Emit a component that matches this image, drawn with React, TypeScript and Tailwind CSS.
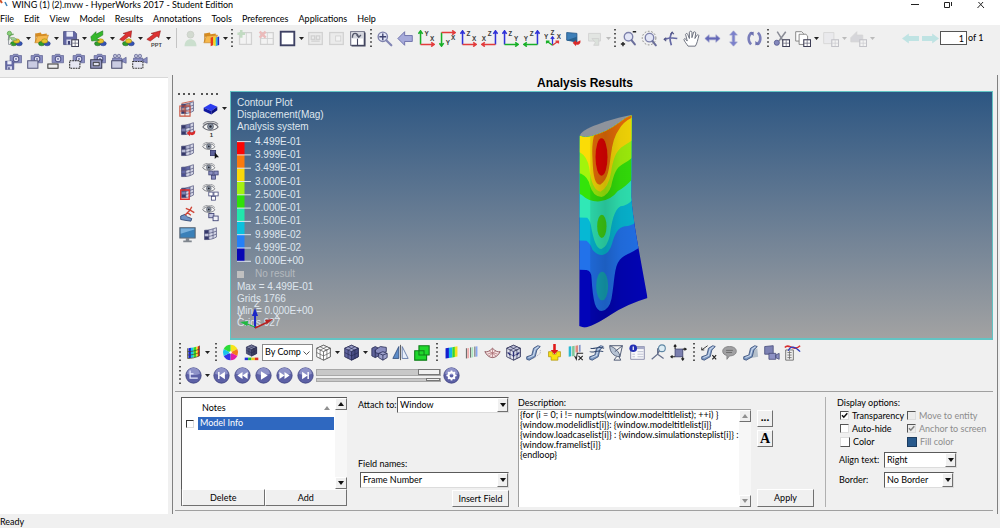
import React from "react";

type Kids = { children?: React.ReactNode };

const Svg = ({ children, size = "h-[17px] w-[17px]" }: Kids & { size?: string }) => (
  <svg viewBox="0 0 20 20" className={`${size} shrink-0`} fill="none" aria-hidden="true">
    {children}
  </svg>
);

const Slot = ({ label, children, faded }: Kids & { label: string; faded?: boolean }) => (
  <button
    type="button"
    aria-label={label}
    disabled={faded}
    className={`flex h-[21px] w-[21px] shrink-0 items-center justify-center ${faded ? "opacity-25" : ""}`}
  >
    <Svg>{children}</Svg>
  </button>
);

const Drop = ({ faded }: { faded?: boolean }) => (
  <span className={`flex w-[7px] shrink-0 items-center justify-center ${faded ? "opacity-25" : ""}`}>
    <svg viewBox="0 0 5 3" className="h-[3px] w-[5px]" aria-hidden="true">
      <path d="M0 0h5L2.500 3z" fill="#222" />
    </svg>
  </span>
);

const Dots = ({ wide }: { wide?: boolean }) => (
  <span className={`flex shrink-0 items-center justify-center ${wide ? "w-[9px]" : "w-[6px]"}`}>
    <svg viewBox="0 0 2 18" className="h-[18px] w-[2px]" aria-hidden="true">
      <path d="M1 0v18" stroke="#222" strokeWidth="1.500" strokeDasharray="1.500 2.600" />
    </svg>
  </span>
);

/* ---------- icon parts ---------- */

const Balls = () => (
  <>
    <ellipse cx="9" cy="16" rx="3.600" ry="2.600" fill="#2f9e2b" stroke="#175f1b" strokeWidth=".6" />
    <ellipse cx="15.500" cy="16" rx="3.600" ry="2.600" fill="#3454b4" stroke="#1d2f78" strokeWidth=".6" />
    <ellipse cx="12.500" cy="13" rx="3.600" ry="2.600" fill="#e8c62c" stroke="#94780f" strokeWidth=".6" />
  </>
);

const Pane = () => (
  <>
    <rect x="11.500" y="11.500" width="8" height="8" fill="#fff" stroke="#3b3b52" strokeWidth="1.300" />
    <path d="M15.500 12v7M12 15.500h7" stroke="#55556c" strokeWidth=".8" />
  </>
);

const Camera = () => (
  <>
    <path d="M6 3h3l1-1.500h5L16 3h3.500v8.500H6z" fill="#8a8ec2" stroke="#5c608f" strokeWidth=".8" />
    <circle cx="13" cy="7" r="3.300" fill="#e4e5f5" stroke="#55588a" strokeWidth="1.200" />
    <circle cx="13" cy="7" r="1.300" fill="#8589b8" />
  </>
);

const Video = () => (
  <>
    <circle cx="6" cy="3.500" r="2" fill="#b9bbd6" stroke="#5c608f" strokeWidth=".8" />
    <circle cx="10.500" cy="3.500" r="2" fill="#b9bbd6" stroke="#5c608f" strokeWidth=".8" />
    <path d="M3 6h11v6H3zM14 8l5-3v7l-5-2z" fill="#8a8ec2" stroke="#5c608f" strokeWidth=".8" />
  </>
);

const Disk = ({ small }: { small?: boolean }) => (
  <g transform={small ? "translate(0 9) scale(.55)" : "translate(1 1) scale(.85)"}>
    <path d="M1 1h15l3 3v15H1z" fill="#6468a4" stroke="#3f4378" />
    <path d="M5 1h9v7H5z" fill="#eceefa" />
    <path d="M5 12h10v7H5z" fill="#dadcf0" />
    <path d="M7 14h3v5H7z" fill="#3f4378" />
  </g>
);

const Folder = () => (
  <>
    <path d="M2 4l6-1 1 2 6-1v4H2z" fill="#d78c22" />
    <path d="M1 15L4 7l13-1-3 9z" fill="#f6b84c" stroke="#c27f20" strokeWidth=".7" />
    <path d="M2 4v10" stroke="#c27f20" />
  </>
);

const Cube = ({ fill = "#6064a0", top = "#9ea2cc", side = "#474b82", line = "#23264d" }) => (
  <>
    <path d="M10 1.500l8 3.500v10l-8 4-8-4V5z" fill={fill} stroke={line} strokeWidth=".9" />
    <path d="M10 1.500l8 3.500-8 4-8-4z" fill={top} stroke={line} strokeWidth=".8" />
    <path d="M18 5v10l-8 4V9z" fill={side} stroke={line} strokeWidth=".8" />
    <path d="M2 10l8 4 8-4M6 7v10M14 7v10M6 3.200l8 4M14 3.200l-8 4" stroke={line} strokeWidth=".7" />
  </>
);

const Mesh = ({ a = "#35386b", b = "#7d82b4" }) => (
  <>
    <path d="M3 5c5 0 8-1 14-3v11c-5 3-9 3-14 3z" fill="#d6d8e8" />
    <path d="M3 5l5-.3v4L3 9z" fill={a} />
    <path d="M8 4.700L13 3.500v4L8 8.700z" fill={b} />
    <path d="M3 9l5-.3v4H3z" fill={b} />
    <path d="M3 12.500h5v3.500H3z" fill={a} />
    <path d="M3 5c5 0 8-1 14-3v11c-5 3-9 3-14 3zM3 9c5 0 9-1 14-3M3 12.500c5 0 9-.8 14-3M8 5v11M13 3.500v11.500" stroke="#4b4e78" strokeWidth=".8" />
  </>
);

const Eye = ({ big }: { big?: boolean }) => (
  <g transform={big ? "translate(0 0)" : "translate(0 0) scale(.8)"}>
    <path d="M1 7c4-6 14-6 18 0-4 5-14 5-18 0z" fill="#f4f4f4" stroke="#63656e" strokeWidth="1.200" />
    <circle cx="10" cy="6.500" r="3.500" fill="#8c97a8" stroke="#464a55" strokeWidth=".8" />
    <circle cx="10" cy="6.500" r="1.400" fill="#22242c" />
    <path d="M1 4C5-1 15-1 19 4" stroke="#8a8c92" strokeWidth="1.200" />
  </g>
);

const Blocks = ({ fill }: { fill: string }) => (
  <g fill={fill} stroke="#3b3f72" strokeWidth=".9">
    <rect x="8" y="9.500" width="5" height="4.500" />
    <rect x="14" y="9.500" width="5" height="4.500" />
    <rect x="11" y="14.500" width="5" height="4.500" />
  </g>
);

const Leg = () => (
  <>
    <path d="M2 15l6-2 2-8 5-3 3 1-4 4-2 8-7 4-3-1z" fill="#7f9bc4" stroke="#2f4672" strokeWidth=".9" />
    <path d="M4 16l6-2.500L12 6l4-3" stroke="#d3dff0" strokeWidth="1.200" />
  </>
);

const Lens = ({ x = 11, y = 8 }) => (
  <g transform={`translate(${x - 11} ${y - 8})`}>
    <circle cx="11" cy="8" r="5" fill="#e3e6f6" stroke="#7d81ab" strokeWidth="1.600" />
    <path d="M14.500 12l4 5" stroke="#6a6e9b" strokeWidth="2.400" strokeLinecap="round" />
  </g>
);

const Letter = ({ x, y, c }: { x: number; y: number; c: string }) => (
  <text x={x} y={y} fontSize="7.500" fontWeight="bold" fill="#3b3b3b" fontFamily="Liberation Sans, sans-serif">
    {c}
  </text>
);

/* Two coloured axes meeting in a corner; `v` is the upright axis and `h` the level one. */
const Axes = ({ v, h, vl, hl, flip, down }: { v: string; h: string; vl: string; hl: string; flip?: boolean; down?: boolean }) => {
  const x = flip ? 17 : 3;
  const end = flip ? 1 : 19;
  const y = down ? 3 : 17;
  const top = down ? 19 : 1;
  const sy = down ? -1 : 1;
  const sx = flip ? 1 : -1;
  return (
    <>
      <path d={`M${x} ${y}V${top}M${x - 2.500} ${top + 3.500 * sy}L${x} ${top}l2.500 ${3.500 * sy}`} stroke={v} strokeWidth="1.800" />
      <path d={`M${x} ${y}H${end}M${end + 3.500 * sx} ${y - 2.500}L${end} ${y}l${3.500 * sx} 2.500`} stroke={h} strokeWidth="1.800" />
      <Letter x={flip ? 8 : down ? 8 : 7.500} y={down ? 18 : 6.500} c={vl} />
      <Letter x={flip ? 1 : 14} y={down ? 12 : 13.500} c={hl} />
    </>
  );
};

const R = "#e23b3b";
const G = "#18b028";
const B = "#2f32d8";

const Rainbow = () => (
  <>
    <path d="M4 5l3-.5v12L4 17z" fill="#1420d0" />
    <path d="M7 4.500L10 4v12l-3 .5z" fill="#12c8e8" />
    <path d="M10 4l3-.7v12L10 16z" fill="#38d828" />
    <path d="M13 3.300l2-.5v12l-2 .5z" fill="#f4e020" />
    <path d="M15 2.800l2-.6v12l-2 .6z" fill="#e42818" />
  </>
);

const Round = ({ label, children }: Kids & { label: string }) => (
  <button type="button" aria-label={label} className="flex h-[21px] w-[21px] shrink-0 items-center justify-center">
    <Svg>
      <circle cx="10" cy="10" r="9" fill="#5d61a6" stroke="#404482" />
      <path d="M2.500 8a7.500 7 0 0 1 15 0c-4 2-11 2-15 0z" fill="#8e92c8" />
      {children}
    </Svg>
  </button>
);

/* ---------- toolbars ---------- */

const MainTools = () => (
  <div className="flex h-[26px] items-center pl-1">
    <Slot label="New session">
      <Balls />
      <path d="M3 12c0-5 3-7 6-7" stroke="#6fa565" strokeWidth="2" />
      <path d="M5 9h5l3 3H7z" fill="#a8d49a" stroke="#5d9155" strokeWidth=".7" />
      <circle cx="4" cy="4" r="2.500" fill="#8bd07c" stroke="#4c9c3e" strokeWidth=".8" />
      <path d="M3 6v11h4" stroke="#8a8f98" />
    </Slot>
    <Drop />
    <Slot label="Open session"><Folder /><Balls /></Slot>
    <Drop />
    <Slot label="Save session"><Disk /><Pane /></Slot>
    <Drop />
    <Slot label="Import">
      <Balls />
      <path d="M1 8l6-6v3l8-4v5l-7 4 3 2-9 1z" fill="#35b82c" stroke="#1d7d1c" strokeWidth=".7" />
    </Slot>
    <Drop />
    <Slot label="Export">
      <Balls />
      <path d="M2 11l7-6-3-1 10-3-1 8-2-2-7 6z" fill="#dd3232" stroke="#931d1d" strokeWidth=".7" />
    </Slot>
    <Drop />
    <Slot label="Publish to PPT">
      <path d="M1 11l8-6-3-1 11-3-2 8-2-2-8 6z" fill="#dd3232" stroke="#931d1d" strokeWidth=".7" />
      <text x="6" y="19.500" fontSize="6.500" fontWeight="bold" fill="#444" fontFamily="Liberation Sans, sans-serif">PPT</text>
    </Slot>
    <Drop />
    <span className="flex w-[8px] shrink-0 justify-center"><span className="h-[20px] w-px bg-[#c4c4c4]" /></span>
    <Slot label="User profile" faded>
      <circle cx="10" cy="5.500" r="4" fill="#7d9a72" stroke="#5d7355" />
      <path d="M3 19c0-5 3-8 7-8s7 3 7 8z" fill="#5fae6b" />
    </Slot>
    <Slot label="Open results">
      <Folder />
      <path d="M9 9l3-1v10l-3 1z" fill="#e43a1c" /><path d="M12 8l3 1v10l-3-1z" fill="#f1d922" />
      <path d="M15 9l2-.7v10l-2 .7z" fill="#2ab7e0" /><path d="M17 8.300l2-.6v10l-2 .6z" fill="#1b2cc4" />
    </Slot>
    <Drop />
    <Dots />
    <Slot label="Add page" faded>
      <path d="M3 3h14v14H3z" fill="#fff" stroke="#777" strokeWidth="1.500" /><path d="M11 3v14" stroke="#777" />
      <path d="M5 0v9M.5 4.500h9" stroke="#3da03d" strokeWidth="3" />
    </Slot>
    <Slot label="Delete page" faded>
      <path d="M3 3h15v14H3z" fill="#fff" stroke="#777" strokeWidth="1.500" /><path d="M11 3v14M3 10h15" stroke="#777" />
      <path d="M2 2l7 7M9 2l-7 7" stroke="#e02020" strokeWidth="3" />
    </Slot>
    <Slot label="Page layout">
      <rect x="2" y="2" width="16" height="16" fill="#fff" stroke="#3e4164" strokeWidth="2.200" />
    </Slot>
    <Drop />
    <Slot label="Swap windows" faded>
      <rect x="2" y="3" width="16" height="14" fill="#ddd" stroke="#777" strokeWidth="1.500" />
      <path d="M5 7h4v4H5zM11 7h4v4h-4zM5 13h10" stroke="#777" strokeWidth="1.500" />
    </Slot>
    <Slot label="Expand window" faded>
      <rect x="2" y="3" width="16" height="14" fill="#ddd" stroke="#777" strokeWidth="1.500" />
      <rect x="9" y="7" width="6" height="6" fill="#fff" stroke="#777" />
    </Slot>
    <Slot label="Synchronise windows">
      <rect x="2" y="2" width="16" height="16" fill="#fff" stroke="#6a6d82" strokeWidth="1.300" />
      <path d="M18.500 3v15.500H3" stroke="#43465f" strokeWidth="2" /><path d="M10 10v8" stroke="#43465f" strokeWidth="1.300" />
      <path d="M3 3h14v7H3z" fill="#d4d6de" /><path d="M4 9c0-7 6-6 7-1M9 5.500l2.500 3L14 6" stroke="#55596c" strokeWidth="1.700" />
    </Slot>
    <Dots />
    <Slot label="Fit">
      <circle cx="8" cy="8" r="5.500" fill="#e3e6f6" stroke="#7d81ab" strokeWidth="1.600" />
      <path d="M12 12l6 6" stroke="#8286b4" strokeWidth="2.600" strokeLinecap="round" />
      <path d="M8 4v8M4 8h8" stroke="#3e4270" strokeWidth="1.600" />
    </Slot>
    <Slot label="Previous view">
      <path d="M1 10l8-8v4.500h9v7H9V18z" fill="#a6aada" stroke="#6468a4" />
    </Slot>
    <Slot label="XY top view"><Axes v={G} h={R} vl="Y" hl="X" /></Slot>
    <Slot label="XY bottom view"><Axes v={G} h={R} vl="Y" hl="X" down /></Slot>
    <Slot label="XZ left view"><Axes v={B} h={R} vl="Z" hl="X" /></Slot>
    <Slot label="XZ right view"><Axes v={B} h={R} vl="Z" hl="X" flip /></Slot>
    <Slot label="YZ front view"><Axes v={B} h={G} vl="Z" hl="Y" /></Slot>
    <Slot label="YZ back view"><Axes v={B} h={G} vl="Z" hl="Y" flip /></Slot>
    <Slot label="Isometric view">
      <path d="M10 18V8M8 10.500L10 8l2 2.500" stroke={B} strokeWidth="1.500" />
      <path d="M10 18l-7-5M3 16v-3h3.500" stroke={G} strokeWidth="1.500" />
      <path d="M10 18l7-5M17 16v-3h-3.500" stroke={R} strokeWidth="1.500" />
      <Letter x={7.700} y={6} c="Z" /><Letter x={0} y={10} c="Y" /><Letter x={15} y={10} c="X" />
    </Slot>
    <Slot label="Reverse view">
      <path d="M2 3l12 1v10L2 12z" fill="#3d7fb8" stroke="#25598a" /><path d="M2 12l12-4v6z" fill="#28618f" />
      <path d="M18 12c1 4-2 6-5 5v2l-4-4 4-3v2c2 0 3-.5 5-2z" fill="#d92a2a" />
    </Slot>
    <Slot label="Capture area" faded>
      <path d="M3 4h14v9H3z" fill="#b9c8bb" stroke="#777" /><path d="M7 10h8v8H9l2-3z" fill="#9fb79f" stroke="#777" />
    </Slot>
    <Drop faded />
    <Dots />
    <Slot label="Zoom in and out">
      <Lens x={10} y={8} /><path d="M15 2h4M1 16.500h5M3.500 14v5" stroke="#222" strokeWidth="1.700" />
    </Slot>
    <Slot label="Zoom area">
      <Lens x={10} y={9} /><circle cx="9.500" cy="9.500" r="8" stroke="#777" strokeWidth="1" strokeDasharray="2 2" />
    </Slot>
    <Slot label="Rotate">
      <path d="M12 3c-3 3-3 9-1 15M3 11c6-2 10-2 15-1" stroke="#6468a4" strokeWidth="2" />
      <path d="M10 5l2-2.500L14 5M5 9l-2.500 2L5 13" stroke="#4e5280" strokeWidth="1.200" />
    </Slot>
    <Slot label="Pan">
      <path d="M6 19c-2-3-4-5-5-8 1-1.500 2-.5 4 2L3 5c1-1.500 2-1 2.500 0L7.500 10 7.500 2.500c.5-1.500 2.500-1.500 3 0V9l2-6.500c1-1 2.500 0 2.500 1L14 10l2.500-4c1-1 2.500 0 2 1-1 4-2 9-4 12z" fill="#fff" stroke="#666a78" strokeWidth="1.100" />
    </Slot>
    <Slot label="Pan left and right"><path d="M1 10l5-4.500v3h8v-3l5 4.500-5 4.500v-3H6v3z" fill="#6468b8" stroke="#9a9dcb" strokeWidth=".8" /></Slot>
    <Slot label="Pan up and down"><path d="M10 1l4.500 5h-3v8h3L10 19l-4.500-5h3V6h-3z" fill="#7b80cc" stroke="#9a9dcb" strokeWidth=".8" /></Slot>
    <Slot label="Rotate about screen axis">
      <path d="M7 3C2 6 2 13 6 17M13 17c5-3 5-10 1-14" stroke="#7a7eba" strokeWidth="3" />
      <path d="M4 3l5-1v5zM16 17l-5 1v-5z" fill="#6b6fae" />
    </Slot>
    <Dots />
    <Slot label="Cut">
      <path d="M5 2l7 11M15 2L7 13" stroke="#8a8c96" strokeWidth="1.800" />
      <circle cx="4.500" cy="15" r="3" fill="#8488bc" stroke="#555a90" /><Pane />
    </Slot>
    <Slot label="Copy">
      <path d="M2 2h7l2 2v9H2z" fill="#fff" stroke="#777" /><path d="M6 5h8l2 2v10H6z" fill="#fff" stroke="#777" /><Pane />
    </Slot>
    <Drop />
    <Slot label="Paste" faded><path d="M2 3h12v13H2z" fill="#dcdce6" stroke="#888" /><Pane /></Slot>
    <Drop faded />
    <Slot label="Overlay" faded><path d="M1 9l7-7v4h7v8H1z" fill="#8c8c9c" stroke="#888" /><Pane /></Slot>
    <Drop faded />
    <div className="ml-6 flex items-center">
      <button type="button" aria-label="Previous page" className="flex w-[20px] justify-center">
        <Svg><path d="M0 10l8-6v3h12v6H8v3z" fill="#bfe3e3" /></Svg>
      </button>
      <button type="button" aria-label="Next page" className="flex w-[20px] justify-center">
        <Svg><path d="M20 10l-8-6v3H0v6h12v3z" fill="#bfe3e3" /></Svg>
      </button>
      <label className="flex items-center gap-px font-['Lato',sans-serif] text-[9px]">
        <input aria-label="Page" defaultValue="1" className="h-[14px] w-[27px] border border-[#555] bg-white pr-[2px] text-right text-[9px]" />
        of 1
      </label>
    </div>
  </div>
);

const CaptureTools = () => (
  <div className="flex h-[21px] items-center pl-[3px]">
    <Slot label="Save image"><Camera /><Disk small /></Slot>
    <Slot label="Capture window"><Camera /><path d="M2 9h12v9H2z" fill="#c9cbe2" stroke="#55587c" strokeWidth="1.200" /></Slot>
    <Slot label="Capture panel"><Camera /><path d="M1 13h12v5H1z" fill="#eee" stroke="#333" strokeWidth="1.200" /></Slot>
    <Slot label="Capture dynamic rectangle"><Camera /><path d="M2 9h12v9H2z" fill="#e6e7f2" stroke="#222" strokeWidth="1.200" strokeDasharray="2 1" /></Slot>
    <Slot label="Capture page"><Camera /><path d="M2 8h13v10H2z" fill="#9a9dc4" stroke="#333652" strokeWidth="1.200" /><path d="M5 11h7v4H5z" fill="#dfe0ee" stroke="#222" /></Slot>
    <Slot label="Record window"><Video /><path d="M2 9h12v9H2z" fill="#c9cbe2" stroke="#44476a" strokeWidth="1.200" /></Slot>
    <Slot label="Record area"><Video /><path d="M2 10h12v8H2z" fill="#e6e7f2" stroke="#333" strokeWidth="1.200" strokeDasharray="2 1" /></Slot>
  </div>
);

const DotRow = () => (
  <svg viewBox="0 0 18 2" className="mb-[3px] ml-px h-[2px] w-[18px]" aria-hidden="true">
    <path d="M0 1h18" stroke="#222" strokeWidth="1.500" strokeDasharray="2 3" />
  </svg>
);

const SideTools = () => (
  <div className="flex w-[57px] shrink-0 pl-1 pt-[2px]">
    <div className="flex w-[23px] flex-col items-start">
      <DotRow />
      <Slot label="Page mesh"><Mesh b="#b48a8a" /><path d="M1 7h12v12H1z" stroke="#c8503c" strokeWidth="1.300" /><path d="M1 13h12M7 7v12M3 4L17 1" stroke="#c8503c" /></Slot>
      <Slot label="Mask"><Mesh /><path d="M19 11c1 5-3 7-6 5v2l-4-4 4-3v2c3 1 4 0 6-2z" fill="#d92a2a" /></Slot>
      <Slot label="Show shaded elements"><Mesh b="#b8bbd6" /></Slot>
      <Slot label="Show elements"><Mesh a="#4b5092" b="#6469a8" /></Slot>
      <Slot label="Feature outline"><Mesh /><path d="M2 7h10v11H2z" stroke="#e03030" strokeWidth="1.600" /></Slot>
      <Slot label="Deformed">
        <path d="M2 13l5-2 3 3 5 2-1 3-7-1-5-1z" fill="#6f92c4" stroke="#2f4672" /><path d="M7 12l6-6 2-4M13 6l5 3M8 4l5 2M10 9l4 3" stroke="#cf4436" strokeWidth="1.600" />
      </Slot>
      <Slot label="Screen">
        <path d="M1 2h18v12H1z" fill="#3a80b8" stroke="#566270" strokeWidth="1.200" /><path d="M8 14h4v3H8zM5 17h10v2H5z" fill="#80868e" /><path d="M2 9l16-5V3H2z" fill="#78b0dc" />
      </Slot>
    </div>
    <div className="flex flex-col items-start">
      <DotRow />
      <div className="flex">
        <Slot label="Entity type"><path d="M2 9l8-4.500L18 8l-7 5z" fill="#2c3cf0" /><path d="M2 9l9 4v4l-9-4z" fill="#1018a0" /><path d="M11 13l7-5v4l-7 5z" fill="#0a1080" /></Slot>
        <Drop />
      </div>
      <Slot label="Show single"><Eye big /><text x="9" y="19" fontSize="7" fontWeight="bold" fill="#333" fontFamily="Liberation Sans, sans-serif">1</text></Slot>
      <Slot label="Pick visible"><Eye /><rect x="10" y="10" width="6" height="6" fill="#5b5f98" stroke="#35386b" /><path d="M15 12v8l2-2h3z" fill="#111" /></Slot>
      <Slot label="Show all"><Eye /><Blocks fill="#8a8ec0" /></Slot>
      <Slot label="Hide all"><Eye /><Blocks fill="#ffffff" /></Slot>
      <Slot label="Reverse visible"><Eye /><rect x="8" y="10" width="6" height="5" fill="#c5c7e0" stroke="#3b3f72" /><rect x="13" y="13" width="6" height="5.500" fill="#f2f2f8" stroke="#3b3f72" /></Slot>
      <Slot label="Mesh display"><Mesh b="#c4c6de" /></Slot>
    </div>
  </div>
);

/* ---------- graphics window ---------- */

const SCALE: [string, string][] = [
  ["4.499E-01", "#fb0404"],
  ["3.999E-01", "#fb7a0e"],
  ["3.499E-01", "#fbd80a"],
  ["3.000E-01", "#a4f012"],
  ["2.500E-01", "#30e008"],
  ["2.000E-01", "#22e6ac"],
  ["1.500E-01", "#0cc0dc"],
  ["9.998E-02", "#2480f8"],
  ["4.999E-02", "#0606b4"],
  ["0.000E+00", ""],
];

const Legend = () => (
  <div className="relative w-[110px] pl-[6px] pt-[5px] text-[10px] leading-[12px] text-[#dfe6ee]">
    <p>Contour Plot</p>
    <p>Displacement(Mag)</p>
    <p>Analysis system</p>
    <div className="mt-[2px] flex h-[133px] gap-1">
      <svg viewBox="0 0 140 1330" className="h-[133px] w-[14px]" aria-hidden="true">
        {SCALE.map(([value, color], i) => (
          <g key={value}>
            {color && <rect x="0" y={66 + i * 133} width="75" height="134" fill={color} />}
            <path d={`M0 ${66 + i * 133}H140`} stroke="#dfe6ee" strokeWidth="10" />
          </g>
        ))}
      </svg>
      <ol className="grid grid-rows-10 items-center">
        {SCALE.map(([value]) => (
          <li key={value}>{value}</li>
        ))}
      </ol>
    </div>
    <p className="mb-px flex items-center gap-[11px] text-[#b4b9be]">
      <span className="size-[7px] bg-[#c0c0c0]" />
      No result
    </p>
    <p>Max = 4.499E-01</p>
    <p>Grids 1766</p>
    <p>Min = 0.000E+00</p>
    <p>Grids 927</p>
    <svg viewBox="0 0 48 34" className="absolute bottom-[-4px] left-[3px] h-[34px] w-[48px]" fill="none" aria-hidden="true">
      <path d="M21 29V14" stroke="#1c28c8" strokeWidth="2" /><path d="M18 17l3-8 3 8z" fill="#1c28c8" />
      <path d="M21 29l13-6" stroke="#b82020" strokeWidth="1.500" /><path d="M31 21l8-1-6 5z" fill="#b82020" />
      <path d="M21 28l-8-3" stroke="#20b840" strokeWidth="1.200" /><path d="M6 23l8-1-1 5z" fill="#20b840" />
      <g fontSize="9" fill="#e6ecf2" fontFamily="Liberation Sans, sans-serif">
        <text x="20" y="8">Z</text><text x="40" y="20">X</text><text x="3" y="20">Y</text>
      </g>
    </svg>
  </div>
);

const Wing = () => (
  <svg viewBox="107 95 219 657" className="absolute left-1/2 top-[20px] h-[219px] w-[73px] -translate-x-1/2" role="img" aria-label="Wing contour">
    <defs>
      <clipPath id="wing">
        <path d="M120 166Q135 174 160 166Q200 156 240 126Q256 112 275 105L274 350Q278 400 290 470L323 653Q260 672 215 702Q150 745 130 741L118 737z" />
      </clipPath>
      <linearGradient id="shade" x1="0" x2="1">
        <stop offset="0" stopColor="#000" stopOpacity="0" />
        <stop offset=".15" stopColor="#000" stopOpacity="0" />
        <stop offset=".17" stopColor="#000" stopOpacity=".1" />
        <stop offset=".38" stopColor="#000" stopOpacity=".18" />
        <stop offset=".6" stopColor="#000" stopOpacity=".08" />
        <stop offset="1" stopColor="#000" stopOpacity=".02" />
      </linearGradient>
    </defs>
    <path d="M120 167C120 146 210 116 275 104C256 135 190 170 140 172z" fill="#8e939c" />
    <g clipPath="url(#wing)">
      <rect x="110" y="90" width="220" height="660" fill="#0204b8" />
      <path d="M110 568L140 569Q154 571 155 592Q158 645 165 670Q172 692 186 692Q208 688 215 655C225 600 222 560 240 538C258 520 275 520 300 500V90H110z" fill="#2272ea" />
      <ellipse cx="187" cy="617" rx="18" ry="43" fill="#14a4b8" />
      <path d="M110 480L140 481Q152 490 158 508Q172 525 188 524Q208 520 216 492C226 458 234 442 255 438Q275 437 290 424V90H110z" fill="#06b8d4" />
      <path d="M110 411L142 412Q152 420 155 445C162 480 170 506 185 506Q202 500 210 465C216 425 222 390 242 378Q262 378 280 356V90H110z" fill="#30e8b6" />
      <ellipse cx="186" cy="438" rx="14" ry="35" fill="#40d414" />
      <path d="M110 338L125 343Q150 366 180 363Q215 358 234 332Q255 322 280 294V90H110z" fill="#34e40a" />
      <path d="M110 277L124 280Q145 290 150 315Q160 350 185 350Q205 345 214 318C222 280 230 262 248 252Q262 245 280 230V90H110z" fill="#a2f40c" />
      <path d="M110 213L122 217Q142 228 148 262Q156 330 182 334Q206 322 214 275C222 220 236 206 252 196L280 178V90H110z" fill="#fbdc06" />
      <path d="M164 160Q155 190 158 235C160 290 166 312 181 313C206 300 208 260 213 225Q220 170 236 150Q248 125 280 110L270 95z" fill="#ec7008" />
      <ellipse cx="185" cy="230" rx="18" ry="56" fill="#e80202" />
      <rect x="118" y="90" width="206" height="660" fill="url(#shade)" />
    </g>
  </svg>
);

/* ---------- lower toolbars ---------- */

const ResultTools = () => (
  <div className="mt-px flex h-[22px] items-center pl-1">
    <Dots />
    <Slot label="Contour"><Rainbow /><path d="M3 5v12c5 0 9-1 14-3V2M3 9c5 0 9-1 14-3M3 13c5 0 9-1 14-3" stroke="#4a4a2a" strokeWidth=".9" /></Slot>
    <Drop />
    <Dots wide />
    <Slot label="Colours">
      <path d="M10 10V1a9 9 0 0 1 8 5z" fill="#f7e51c" /><path d="M10 10l8-4a9 9 0 0 1 0 8z" fill="#f47a1c" />
      <path d="M10 10l8 4a9 9 0 0 1-8 5z" fill="#e41ca8" /><path d="M10 10v9a9 9 0 0 1-8-5z" fill="#3434e8" />
      <path d="M10 10l-8 4a9 9 0 0 1 0-8z" fill="#18c4ec" /><path d="M10 10L2 6a9 9 0 0 1 8-5z" fill="#2cdc38" /><circle cx="10" cy="10" r="1.500" fill="#fff" />
    </Slot>
    <Slot label="Component colour">
      <g transform="translate(2.500 0) scale(.75)"><Cube fill="#51557c" top="#8488a8" side="#3c3f60" /></g>
      <path d="M2 16h4v3H2z" fill="#2232d8" /><path d="M6 16h4v3H6z" fill="#28c038" /><path d="M10 16h4v3h-4z" fill="#f0c818" /><path d="M14 16h4v3h-4z" fill="#e03028" />
    </Slot>
    <span className="relative flex h-[17px] w-[51px] shrink-0">
      <select aria-label="Colour mode" className="w-full appearance-none border border-[#8a8a8a] bg-white pl-[2px] font-['Lato',sans-serif] text-[9px]">
        <option>By Comp</option>
      </select>
      <svg viewBox="0 0 7 4" className="pointer-events-none absolute right-[3px] top-[7px] h-[4px] w-[7px]" aria-hidden="true"><path d="M.5.5l3 3 3-3" fill="none" stroke="#555" /></svg>
    </span>
    <Slot label="Wireframe"><Cube fill="#fff" top="#fff" side="#fff" line="#444" /></Slot>
    <Drop />
    <Slot label="Shaded"><Cube /></Slot>
    <Drop />
    <Slot label="Combine">
      <path d="M1 5l4-2 4 2v9l-4 2-4-2z" fill="#5f639a" stroke="#2c2f58" /><path d="M5 7l6-4 7 1v5l-7 3-6-2z" fill="#8a8ec0" stroke="#2c2f58" /><path d="M9 11l5-2 5 2v5l-5 3-5-3z" fill="#9ea2cc" stroke="#2c2f58" /><path d="M9 11l5 2 5-2M14 13v6M5 7v9" stroke="#2c2f58" />
    </Slot>
    <Slot label="Mirror"><path d="M8 3v14H1z" fill="#5d8cc8" stroke="#34507e" /><path d="M12 3v14h7z" fill="#e8effa" stroke="#5c74a4" /><path d="M10 1v18" stroke="#333" strokeWidth=".9" /></Slot>
    <Slot label="Group"><path d="M7 2h12v11h-3v6H2V8h5z" fill="#1fd82c" stroke="#0f7d18" strokeWidth="1.300" /><path d="M7 8h6v5M7 8v5h9" stroke="#0f7d18" strokeWidth="1.200" /></Slot>
    <Dots wide />
    <div className="flex w-[248px] shrink-0 justify-between [&>button]:w-5">
      <Slot label="Contour panel"><path d="M3 5l4-.6v12L3 17z" fill="#1420d0" /><path d="M7 4.400L11 3.800v12l-4 .6z" fill="#12b8e8" /><path d="M11 3.800l3-.6v12l-3 .6z" fill="#38d828" /><path d="M14 3.200l3-.6v12l-3 .6z" fill="#f4e020" /></Slot>
      <Slot label="Iso"><path d="M4 5v12M9 4v12M14 3v12" stroke="#444" /><path d="M5 5l2-.4v12L5 17z" fill="#f0a8a8" /><path d="M10 4l2-.4v12l-2 .4z" fill="#a8e8c0" /><path d="M15 3l2-.4v12l-2 .4z" fill="#88a8f0" /></Slot>
      <Slot label="Deformed panel"><path d="M1 9c3 1 6-1 9-4 3 3 6 5 9 4-2 4-5 7-9 7S3 13 1 9z" fill="#f8e4e4" stroke="#844a52" /><path d="M4 12c4-2 8-2 12 0M10 5v11M6 8l8 6M14 8l-8 6" stroke="#a66a70" strokeWidth=".8" /></Slot>
      <Slot label="Vector"><Cube fill="#e3e4ee" top="#c4c6de" side="#d2d4e4" /><path d="M10 15V9M6 13l-2-3M14 13l2-3" stroke="#2b2f7a" strokeWidth="1.600" /></Slot>
      <Slot label="Section cut"><Leg /><path d="M10 17l8-6V6" stroke="#aab" strokeDasharray="1.500 1" /></Slot>
      <Slot label="Load">
        <path d="M3 9h5v3h4V9h5v6h-3v4H6v-4H3z" fill="#f8e010" stroke="#a88c08" strokeWidth=".8" /><path d="M8.500 0h3v7h3L10 12 5.500 7h3z" fill="#e01818" />
      </Slot>
      <Slot label="Derived results">
        <path d="M2 3l3-.5v12L2 15z" fill="#28b8d0" /><path d="M6 2.500L9 2v12l-3 .5z" fill="#80c898" /><path d="M10 2l3-.5V10h-3z" fill="#e08a7c" /><path d="M14 1.500l2-.5v8h-2z" fill="#8494c8" />
        <path d="M9 14l2 4 1-7h7" stroke="#222" strokeWidth="1.200" /><path d="M13.500 14l5 5M18.500 14l-5 5" stroke="#222" strokeWidth="1.300" />
      </Slot>
      <Slot label="Streamlines"><Leg /><path d="M3 5c5 2 8-3 16 0M2 9c5 2 9-3 16 0" stroke="#35496e" strokeWidth="1.200" /></Slot>
      <Slot label="Tracking"><path d="M2 2c0 8 5 13 12 13 0-5-6-11-12-13z" fill="#b8c4d4" stroke="#4a5670" /><path d="M8 9l9-7M17 2l-3 13M2 2l15 0M10 15l-3 4h8l-2-4" stroke="#4a5670" strokeWidth="1.100" /></Slot>
      <Slot label="Notes">
        <path d="M2 3h16v15H2z" fill="#f8f8fa" stroke="#7c80a0" /><path d="M8 3h10v3H8z" fill="#a8acc8" /><path d="M10 9h7M10 12h7M10 15h7M4 12h3M4 15h3" stroke="#b4b8cc" /><circle cx="5" cy="5" r="4.500" fill="#2430b4" /><path d="M5 3v4" stroke="#fff" strokeWidth="1.400" />
      </Slot>
      <Slot label="Measure"><circle cx="14" cy="5" r="4" fill="#dcecf4" stroke="#5f87a4" strokeWidth="1.300" /><path d="M11 8l-2 4-7 6M9 12l7 5M9 5v7" stroke="#66708c" strokeWidth="1.500" /></Slot>
      <Slot label="Transform"><path d="M6 6h9v9H6z" fill="#7b7fae" stroke="#3f4270" /><path d="M6 15H1M6 6V1M15 15v4M15 6h4M4.500 3L6 1l1.500 2M3 13.500L1 15l2 1.500M17 4.500L19 6l-2 1.500M13.500 17l1.500 2 1.500-2" stroke="#222" strokeWidth="1.300" /></Slot>
    </div>
    <Dots wide />
    <Slot label="Trace"><Leg /><path d="M2 7l7-5M2 4v3h3" stroke="#222" /><path d="M14.500 13l4.500 5M19 13l-4.500 5" stroke="#222" strokeWidth="1.400" /></Slot>
    <Slot label="Comment"><path d="M10 3c5 0 8 2.300 8 5.500S15 14 10 14l-3 4v-4.500C4 13 2 11 2 8.500 2 5.300 5 3 10 3z" fill="#a0a0a2" stroke="#7e7e80" /><path d="M6 7.500h8M6 10h7" stroke="#666" /></Slot>
    <Slot label="Shape"><path d="M8 17l11-2-1-10-4 2z" fill="#b4bfca" /><Leg /></Slot>
    <Slot label="Camera view"><path d="M2 3l10-1v10H2z" fill="#7d82b4" stroke="#4d517e" /><path d="M7 11h8v7H7zM15 13l4-2v7l-4-2z" fill="#8d91c4" stroke="#4d517e" /></Slot>
    <Slot label="Plot"><path d="M2 7h9v12H2z" fill="#eee" stroke="#666" /><path d="M4 10h5M4 13h5M4 16h5M6.500 8v10" stroke="#666" strokeWidth=".9" /><path d="M1 4c5-6 9 6 18-2" stroke="#d83030" strokeWidth="1.800" /><path d="M5 8C8 1 13 3 19 9" stroke="#2c3cc0" strokeWidth="1.400" /></Slot>
  </div>
);

const slider =
  "w-full appearance-none border border-[#a8a8a8] bg-[#c8c8c8] [&::-webkit-slider-thumb]:appearance-none [&::-webkit-slider-thumb]:border [&::-webkit-slider-thumb]:border-[#777] [&::-webkit-slider-thumb]:bg-[#f0f0f0]";

const AnimationTools = () => (
  <div className="flex h-[24px] items-center pl-1">
    <Dots />
    <Round label="Animation mode"><path d="M6 4v9h9" stroke="#e8eaff" strokeWidth="1.500" /><path d="M6 8h4" stroke="#e8eaff" strokeWidth="1.500" /></Round>
    <Drop />
    <Round label="First frame"><path d="M14 5.500v9L7.500 10zM6 6h1.700v8H6z" fill="#fff" /></Round>
    <Round label="Backward"><path d="M10 6v8l-6-4zM16 6v8l-6-4z" fill="#fff" /></Round>
    <Round label="Play"><path d="M7 5l8 5-8 5z" fill="#fff" /></Round>
    <Round label="Forward"><path d="M4 6v8l6-4zM10 6v8l6-4z" fill="#fff" /></Round>
    <Round label="Last frame"><path d="M6 5.500v9l6.500-4.500zM12.300 6H14v8h-1.700z" fill="#fff" /></Round>
    <div className="flex w-[125px] shrink-0 flex-col gap-[2px]">
      <input type="range" aria-label="Frame" defaultValue="100" className={`${slider} h-[7px] [&::-webkit-slider-thumb]:h-[6px] [&::-webkit-slider-thumb]:w-[22px]`} />
      <input type="range" aria-label="Speed" defaultValue="100" className={`${slider} h-[4px] [&::-webkit-slider-thumb]:h-[3px] [&::-webkit-slider-thumb]:w-[14px]`} />
    </div>
    <Round label="Animation settings">
      <circle cx="10" cy="10" r="3.500" stroke="#fff" strokeWidth="2.400" />
      <path d="M10 4v2M10 14v2M4 10h2M14 10h2M6 6l1.200 1.200M12.800 12.800L14 14M6 14l1.200-1.200M12.800 7.200L14 6" stroke="#fff" strokeWidth="2" />
    </Round>
  </div>
);

/* ---------- notes panel ---------- */

const raised = "border border-b-[#707070] border-l-white border-r-[#707070] border-t-white bg-[#f0f0f0]";
const sunken = "border border-b-[#dcdcdc] border-l-[#5a5a5a] border-r-[#dcdcdc] border-t-[#5a5a5a] bg-white";

const Tri = ({ up, pale }: { up?: boolean; pale?: boolean }) => (
  <svg viewBox="0 0 6 4" className="h-[4px] w-[6px]" aria-hidden="true">
    <path d={up ? "M0 4h6L3 0z" : "M0 0h6L3 4z"} fill={pale ? "#909090" : "#111"} />
  </svg>
);

const ScrollBar = ({ pale }: { pale?: boolean }) => (
  <div className="flex w-[12px] shrink-0 flex-col justify-between bg-[#f7f7f7]">
    <button type="button" aria-label="Scroll up" className={`flex h-[12px] items-center justify-center ${raised}`}><Tri up pale={pale} /></button>
    <button type="button" aria-label="Scroll down" className={`flex h-[12px] items-center justify-center ${raised}`}><Tri pale={pale} /></button>
  </div>
);

const Select = ({ id, value, className }: { id: string; value: string; className: string }) => (
  <span className={`relative flex h-[16px] ${className}`}>
    <select id={id} className={`w-full appearance-none pl-[2px] ${sunken}`}>
      <option>{value}</option>
    </select>
    <span className={`pointer-events-none absolute bottom-px right-px top-px flex w-[11px] items-center justify-center ${raised}`}><Tri /></span>
  </span>
);

const Check = ({ label, checked, disabled }: { label: string; checked?: boolean; disabled?: boolean }) => (
  <label className={`flex h-[13px] items-center gap-[3px] ${disabled ? "text-[#8c8c8c]" : ""}`}>
    <span className="relative flex size-[9px] shrink-0">
      <input
        type="checkbox"
        defaultChecked={checked}
        disabled={disabled}
        className={`peer size-[9px] appearance-none border border-b-[#ddd] border-l-[#555] border-r-[#ddd] border-t-[#555] ${disabled ? "bg-[#ececec]" : "bg-white"}`}
      />
      <svg viewBox="0 0 9 9" className="pointer-events-none absolute inset-0 hidden size-[9px] peer-checked:block" fill="none" aria-hidden="true">
        <path d="M2 4.200l1.800 2L7.300 2.200" stroke={disabled ? "#808080" : "#111"} strokeWidth="1.500" />
      </svg>
    </span>
    {label}
  </label>
);

const NotesPanel = () => (
  <section className="ml-[2px] mr-1 mt-1 flex h-[120px] whitespace-nowrap border-b border-t border-[#a0a0a0] pb-[3px] pl-[6px] pt-[5px] font-['Lato','Liberation_Sans',sans-serif] text-[9px] leading-[12px]">
    <div className="flex w-[166px] shrink-0 flex-col">
      <div className="flex h-[92px] border-l border-t border-[#5a5a5a] bg-white">
        <div className="flex-1">
          <div className="flex h-[19px] items-center justify-between pl-[20px] pr-[5px]">
            <span>Notes</span>
            <Tri up pale />
          </div>
          <label className="flex h-[13px] items-center gap-1 pl-1">
            <input type="checkbox" className="size-[8px] shrink-0 appearance-none border border-b-[#ddd] border-l-[#333] border-r-[#ddd] border-t-[#333] bg-white" />
            <span className="mr-px h-[13px] flex-1 bg-[#2f68c0] pl-[2px] text-white">Model Info</span>
          </label>
        </div>
        <ScrollBar />
      </div>
      <div className="grid h-[17px] grid-cols-2 border-l border-[#707070]">
        <button type="button" className={raised}>Delete</button>
        <button type="button" className={raised}>Add</button>
      </div>
    </div>

    <div className="ml-[11px] flex w-[151px] shrink-0 flex-col">
      <div className="flex items-center justify-between">
        <label htmlFor="attach">Attach to:</label>
        <Select id="attach" value="Window" className="w-[112px]" />
      </div>
      <label htmlFor="field" className="mt-auto">Field names:</label>
      <Select id="field" value="Frame Number" className="ml-[2px] mt-[2px]" />
      <button type="button" className={`mt-[2px] h-[17px] w-[57px] self-end ${raised}`}>Insert Field</button>
    </div>

    <div className="ml-[9px] flex min-w-0 flex-1 flex-col">
      <label htmlFor="description">Description:</label>
      <div className="flex flex-1 border-l border-t border-[#a0a0a0] bg-white">
        <textarea
          id="description"
          className="min-w-0 flex-1 resize-none overflow-hidden bg-white pl-px leading-[10px] outline-none"
          defaultValue={"{for (i = 0; i != numpts(window.modeltitlelist); ++i) }\n{window.modelidlist[i]}: {window.modeltitlelist[i]}\n{window.loadcaselist[i]} : {window.simulationsteplist[i]} :\n{window.framelist[i]}\n{endloop}"}
        />
        <ScrollBar pale />
      </div>
    </div>

    <div className="ml-[6px] flex w-[57px] shrink-0 flex-col pt-[13px]">
      <button type="button" className={`flex h-[17px] w-[16px] items-center justify-center pb-1 text-[12px] font-bold ${raised}`}>...</button>
      <button type="button" className={`mt-[3px] flex h-[17px] w-[16px] items-center justify-center font-['Liberation_Serif',serif] text-[14px] font-bold ${raised}`}>A</button>
      <button type="button" className={`mt-auto h-[18px] w-full ${raised}`}>Apply</button>
    </div>

    <div className="ml-[11px] w-px shrink-0 bg-[#b0b0b0]" />

    <div className="ml-[11px] flex w-[156px] shrink-0 flex-col">
      <p>Display options:</p>
      <div className="grid grid-cols-[67px_1fr] pl-[3px]">
        <Check label="Transparency" checked />
        <Check label="Move to entity" disabled />
        <Check label="Auto-hide" />
        <Check label="Anchor to screen" checked disabled />
        <button type="button" className="flex h-[13px] items-center gap-[3px]"><span className="size-[10px] border border-b-[#555] border-l-[#ddd] border-r-[#555] border-t-[#ddd] bg-white" />Color</button>
        <button type="button" disabled className="flex h-[13px] items-center gap-[3px] text-[#8c8c8c]"><span className="size-[10px] border border-[#1c3c60] bg-[#28598c]" />Fill color</button>
      </div>
      <div className="mt-1 grid grid-cols-[45px_1fr] items-center gap-y-1 pl-[2px]">
        <label htmlFor="align">Align text:</label>
        <Select id="align" value="Right" className="w-[73px]" />
        <label htmlFor="border">Border:</label>
        <Select id="border" value="No Border" className="w-[70px]" />
      </div>
    </div>
  </section>
);

const MENU = ["File", "Edit", "View", "Model", "Results", "Annotations", "Tools", "Preferences", "Applications", "Help"];

export default function App() {
  return (
    <div className="flex min-h-screen flex-col overflow-hidden bg-[#f0f0f0] font-['Liberation_Sans',sans-serif] text-black">
      <header className="flex h-[12px] justify-between overflow-hidden bg-white font-['Lato',sans-serif]">
        <div className="flex">
          <svg viewBox="0 0 12 12" className="h-[12px] w-[12px]" fill="none" aria-hidden="true">
            <path d="M0 0l2 3" stroke="#d05028" strokeWidth="2" /><path d="M5 2l2 4" stroke="#3f83b8" strokeWidth="1.500" />
          </svg>
          <h1 className="text-[9px] leading-[9px]">WING (1) (2).mvw - HyperWorks 2017 - Student Edition</h1>
        </div>
        <div className="flex gap-[25px] pr-[15px]">
          <button type="button" aria-label="Minimise"><svg viewBox="0 0 8 8" className="size-[8px]"><path d="M0 2.500h8" stroke="#222" /></svg></button>
          <button type="button" aria-label="Restore"><svg viewBox="0 0 8 8" className="size-[8px]" fill="none"><path d="M.5.5h5v5h-5zM7.500 0v4" stroke="#222" /></svg></button>
          <button type="button" aria-label="Close"><svg viewBox="0 0 8 8" className="size-[8px]"><path d="M.5-1l6.500 7M7-1L.5 6" stroke="#222" /></svg></button>
        </div>
      </header>
      <nav className="flex h-[13px] items-center gap-[10px] bg-white font-['Lato',sans-serif] text-[9px] leading-[13px]">
        {MENU.map((item) => (
          <button type="button" key={item}>{item}</button>
        ))}
      </nav>
      <div className="h-[50px]">
        <MainTools />
        <CaptureTools />
      </div>
      <div className="flex flex-1">
        <aside className="mt-[2px] w-[168px] shrink-0 border-t border-[#d8d8d8] bg-white" />
        <main className="ml-1 mr-[2px] flex min-w-0 flex-1 flex-col border-l border-r border-[#808080] pb-[3px]">
          <h2 className="text-center text-[12px] font-bold leading-[16px]">Analysis Results</h2>
          <div className="flex min-h-[249px] flex-1">
            <SideTools />
            <div className="relative mr-1 flex-1 border border-b-2 border-[#62c4c4] bg-linear-to-b from-[#2c5682] to-[#a2a2a2]">
              <Legend />
              <Wing />
            </div>
          </div>
          <ResultTools />
          <AnimationTools />
          <NotesPanel />
        </main>
      </div>
      <footer className="h-[14px] font-['Lato',sans-serif] text-[9px] leading-[16px]">Ready</footer>
    </div>
  );
}
